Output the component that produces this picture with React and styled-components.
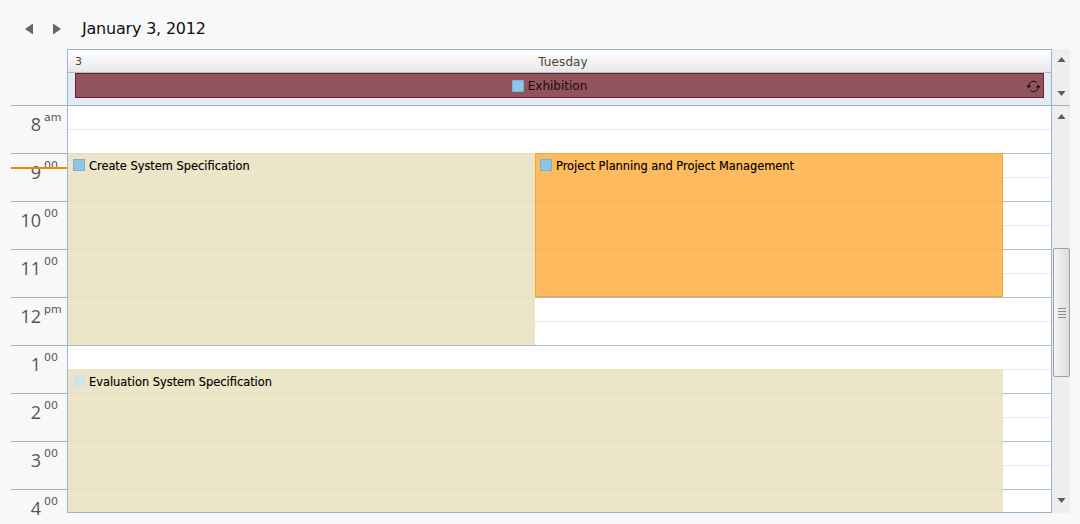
import React from 'react'
import styled, { createGlobalStyle } from 'styled-components'

const GlobalStyle = createGlobalStyle`
  html, body { margin: 0; padding: 0; background: #f8f8f8; }
  body { font-family: "DejaVu Sans", "Liberation Sans", sans-serif; overflow: hidden; }
`

const HOUR = 48

const hours = [
  { h: '8', m: 'am' },
  { h: '9', m: '00' },
  { h: '10', m: '00' },
  { h: '11', m: '00' },
  { h: '12', m: 'pm' },
  { h: '1', m: '00' },
  { h: '2', m: '00' },
  { h: '3', m: '00' },
  { h: '4', m: '00' },
]

function NavArrow({ dir }) {
  return (
    <svg width="10" height="12" viewBox="0 0 10 12">
      <polygon points={dir === 'left' ? '9,0.5 9,11.5 1,6' : '1,0.5 1,11.5 9,6'} fill="#666" />
    </svg>
  )
}

function ScrollArrow({ dir }) {
  return (
    <svg width="9" height="7" viewBox="0 0 9 7">
      <polygon points={dir === 'up' ? '0.5,6 8.5,6 4.5,1' : '0.5,1 8.5,1 4.5,6'} fill="#5c5c5c" />
    </svg>
  )
}

function RecurIcon() {
  return (
    <svg width="15" height="13" viewBox="0 0 15 13" fill="none" stroke="#120a0c" strokeWidth="1">
      <path d="M2.8 5.8 A4.7 4.7 0 0 1 10.6 2.4" />
      <path d="M12.2 7.2 A4.7 4.7 0 0 1 4.4 10.6" />
      <polygon points="0.4,5.6 5.2,5.6 2.8,8.2" fill="#120a0c" stroke="none" />
      <polygon points="9.8,7.4 14.6,7.4 12.2,4.8" fill="#120a0c" stroke="none" />
    </svg>
  )
}

export default function App() {
  return (
    <Page>
      <GlobalStyle />
      <Toolbar>
        <NavButton><NavArrow dir="left" /></NavButton>
        <NavButton><NavArrow dir="right" /></NavButton>
        <DateTitle>January 3, 2012</DateTitle>
      </Toolbar>

      <HeaderRow>
        <Corner />
        <DayHeader>
          <DayLabels>
            <span>3</span>
            <DayName>Tuesday</DayName>
          </DayLabels>
          <AllDayArea>
            <AllDayEvent>
              <StatusBox />
              <span>Exhibition</span>
              <RecurSlot><RecurIcon /></RecurSlot>
            </AllDayEvent>
          </AllDayArea>
        </DayHeader>
        <ScrollTrack $pad="7px 0 8px">
          <ScrollArrow dir="up" />
          <ScrollArrow dir="down" />
        </ScrollTrack>
      </HeaderRow>

      <Body>
        <Ruler>
          {hours.map((item) => (
            <HourCell key={item.h}>
              <HourNum>{item.h}</HourNum>
              <HourSuffix>{item.m}</HourSuffix>
            </HourCell>
          ))}
          <NowLine />
        </Ruler>
        <Grid>
          {hours.map((item) => (
            <GridHour key={item.h}>
              <GridHalf />
            </GridHour>
          ))}
          <Appointment $tone="tan" $left={0} $top={48} $width={467} $height={192}>
            <StatusBox />
            <span>Create System Specification</span>
          </Appointment>
          <Appointment $tone="orange" $left={467} $top={48} $width={468} $height={144}>
            <StatusBox />
            <span>Project Planning and Project Management</span>
          </Appointment>
          <Appointment $tone="tan" $left={0} $top={264} $width={935} $height={144}>
            <StatusBox $pale />
            <span>Evaluation System Specification</span>
          </Appointment>
        </Grid>
        <ScrollTrack $line $pad="7px 0 9px">
          <ScrollArrow dir="up" />
          <Thumb>
            <Grip />
          </Thumb>
          <ScrollArrow dir="down" />
        </ScrollTrack>
      </Body>
    </Page>
  )
}

const Page = styled.div`
  width: 1080px;
  height: 524px;
  background: #f8f8f8;
  overflow: hidden;
  color: #000;
`

const Toolbar = styled.div`
  display: flex;
  align-items: center;
  height: 49px;
  padding: 8px 0 0 24px;
  box-sizing: border-box;
`

const NavButton = styled.div`
  display: flex;
  align-items: center;
  justify-content: center;
  width: 10px;
  height: 12px;
  margin-right: 18px;
`

const DateTitle = styled.div`
  font-size: 16px;
  margin-left: -8px;
  padding-left: 10px;
  color: #111;
  letter-spacing: -0.2px;
`

const HeaderRow = styled.div`
  display: flex;
  height: 56px;
  padding-right: 10px;
`

const Corner = styled.div`
  width: 67px;
  flex: none;
`

const DayHeader = styled.div`
  flex: 1;
  display: flex;
  flex-direction: column;
  border: 1px solid #98b4d4;
  border-bottom: none;
`

const DayLabels = styled.div`
  display: flex;
  align-items: center;
  height: 23px;
  padding: 1px 7px 0;
  box-sizing: border-box;
  font-size: 11px;
  color: #444;
  background: linear-gradient(#ffffff, #e9e8e8);
  border-bottom: 1px solid #a8bcd6;
`

const DayName = styled.span`
  flex: 1;
  text-align: center;
  font-size: 12px;
  letter-spacing: 0.1px;
`

const AllDayArea = styled.div`
  flex: 1;
  background: #e4e9f6;
  padding: 0 7px;
`

const AllDayEvent = styled.div`
  position: relative;
  display: flex;
  align-items: center;
  justify-content: center;
  gap: 4px;
  height: 25px;
  padding-right: 20px;
  box-sizing: border-box;
  border: 1px solid #72202f;
  background: #91535c;
  font-size: 12px;
  color: #1d0a0e;
`

const RecurSlot = styled.div`
  position: absolute;
  right: 2px;
  top: 6px;
  line-height: 0;
`

const StatusBox = styled.div`
  width: 12px;
  height: 12px;
  flex: none;
  box-sizing: border-box;
  background: ${(p) => (p.$pale ? '#d3e3ea' : '#8cc6e4')};
  border: 1px solid ${(p) => (p.$pale ? '#d3e3ea' : '#74b3d6')};
`

const ScrollTrack = styled.div`
  position: relative;
  width: 18px;
  flex: none;
  display: flex;
  flex-direction: column;
  align-items: center;
  justify-content: space-between;
  background: #eeeeee;
  padding: ${(p) => p.$pad};
  box-sizing: border-box;
  border-top: ${(p) => (p.$line ? '1px solid #a3afbb' : 'none')};
`

const Body = styled.div`
  display: flex;
  height: 408px;
  padding-right: 10px;
  margin-left: 11px;
`

const Ruler = styled.div`
  position: relative;
  width: 56px;
  flex: none;
`

const HourCell = styled.div`
  display: flex;
  justify-content: flex-end;
  height: ${HOUR}px;
  box-sizing: border-box;
  border-top: 1px solid #a3afbb;
  padding-right: 6px;
  color: #555;

  &:last-child {
    height: 30px;
  }
`

const HourNum = styled.span`
  font-family: "Open Sans", "DejaVu Sans", sans-serif;
  font-size: 18px;
  line-height: 24px;
  margin-top: 6px;
  margin-right: 3px;
`

const HourSuffix = styled.span`
  font-size: 11px;
  line-height: 14px;
  margin-top: 5px;
  width: 17px;
  text-align: left;
`

const NowLine = styled.div`
  position: absolute;
  left: 0;
  right: 0;
  top: 62px;
  height: 2px;
  background: #e98a0a;
`

const Grid = styled.div`
  position: relative;
  flex: 1;
  background: #fff;
  border: 1px solid #98b4d4;
  border-top: none;
  overflow: hidden;
  height: 408px;
  box-sizing: border-box;
`

const GridHour = styled.div`
  height: ${HOUR}px;
  box-sizing: border-box;
  border-top: 1px solid #a4bfd0;

  &:first-child {
    border-top-color: #a3afbb;
  }
`

const GridHalf = styled.div`
  height: 24px;
  box-sizing: border-box;
  border-bottom: 1px solid #e9e9e9;
`

const Appointment = styled.div`
  position: absolute;
  left: ${(p) => p.$left}px;
  top: ${(p) => p.$top}px;
  width: ${(p) => p.$width}px;
  height: ${(p) => p.$height}px;
  box-sizing: border-box;
  display: flex;
  align-items: flex-start;
  gap: 4px;
  padding: ${(p) => (p.$tone === 'orange' ? '5px 4px' : '6px 5px')};
  font-size: 11.4px;
  line-height: 14px;
  color: #000;
  -webkit-text-stroke: 0.15px #000;
  background: ${(p) => (p.$tone === 'orange' ? 'rgba(254, 174, 66, 0.85)' : 'rgba(235, 225, 192, 0.88)')};
  border: ${(p) => (p.$tone === 'orange' ? '1px solid #f9a62e' : 'none')};
`

const Thumb = styled.div`
  position: absolute;
  left: 1px;
  top: 142px;
  width: 17px;
  height: 129px;
  box-sizing: border-box;
  border: 1px solid #a0a0a0;
  border-radius: 2px;
  background: linear-gradient(90deg, #f4f4f4, #dedede);
  display: flex;
  align-items: center;
  justify-content: center;
`

const Grip = styled.div`
  width: 8px;
  height: 10px;
  background: repeating-linear-gradient(#888 0 1px, transparent 1px 3px);
`
